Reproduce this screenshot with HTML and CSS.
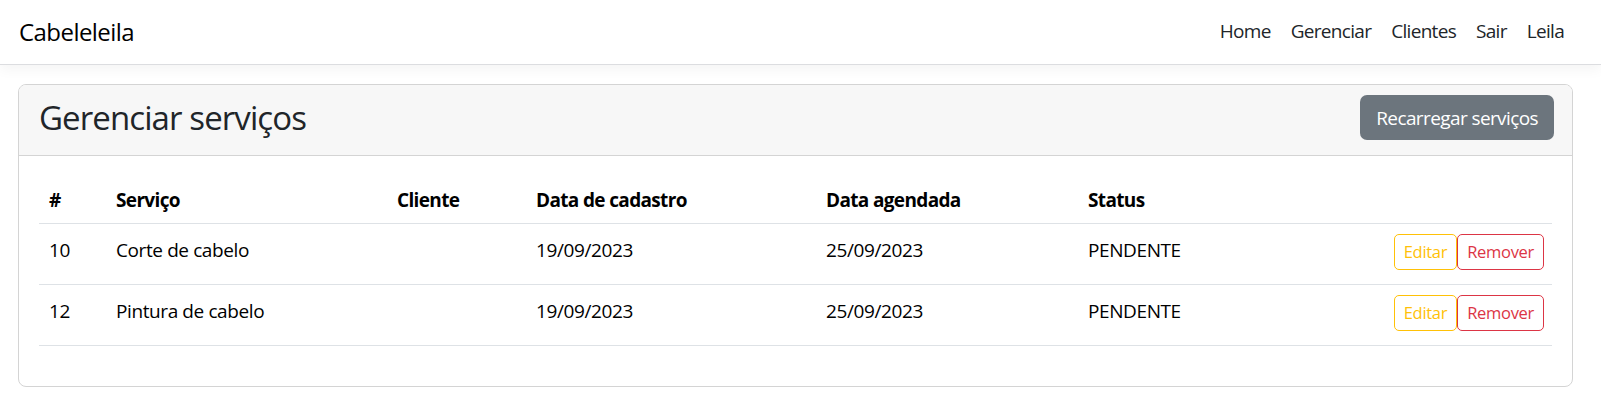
FILE: index.html
```html
<!DOCTYPE html>
<html lang="pt-BR">
<head>
<meta charset="utf-8">
<title>Cabeleleila</title>
<link rel="stylesheet" href="styles.css">
</head>
<body>
<nav class="navbar">
  <a class="brand" href="#">Cabeleleila</a>
  <ul class="nav-links">
    <li><a href="#">Home</a></li>
    <li><a href="#">Gerenciar</a></li>
    <li><a href="#">Clientes</a></li>
    <li><a href="#">Sair</a></li>
    <li><a href="#">Leila</a></li>
  </ul>
</nav>
<main class="page">
  <section class="card">
    <header class="card-header">
      <h3 class="card-title">Gerenciar serviços</h3>
      <button class="btn btn-secondary" type="button">Recarregar serviços</button>
    </header>
    <div class="card-body">
      <table class="table">
        <thead>
          <tr>
            <th class="col-id">#</th>
            <th class="col-service">Serviço</th>
            <th class="col-client">Cliente</th>
            <th class="col-created">Data de cadastro</th>
            <th class="col-scheduled">Data agendada</th>
            <th class="col-status">Status</th>
            <th class="col-actions"></th>
          </tr>
        </thead>
        <tbody>
          <tr>
            <td>10</td>
            <td>Corte de cabelo</td>
            <td></td>
            <td>19/09/2023</td>
            <td>25/09/2023</td>
            <td>PENDENTE</td>
            <td class="actions"><button class="btn-sm btn-warning" type="button">Editar</button><button class="btn-sm btn-danger" type="button">Remover</button></td>
          </tr>
          <tr>
            <td>12</td>
            <td>Pintura de cabelo</td>
            <td></td>
            <td>19/09/2023</td>
            <td>25/09/2023</td>
            <td>PENDENTE</td>
            <td class="actions"><button class="btn-sm btn-warning" type="button">Editar</button><button class="btn-sm btn-danger" type="button">Remover</button></td>
          </tr>
        </tbody>
      </table>
    </div>
  </section>
</main>
</body>
</html>
```
FILE: styles.css
```css
* { box-sizing: border-box; }

body {
  margin: 0;
  background: #fff;
  color: #212529;
  font-family: "Open Sans", "Noto Sans", sans-serif;
  font-size: 19px;
  letter-spacing: -0.4px;
}

.navbar {
  height: 65px;
  display: flex;
  align-items: center;
  justify-content: space-between;
  padding: 0 27px 2px 19px;
  background: #fff;
  border-bottom: 1px solid #dcdde0;
  box-shadow: 0 5px 12px rgba(0, 0, 0, 0.045);
  position: relative;
  z-index: 1;
}

.brand {
  color: #000;
  text-decoration: none;
  font-size: 24px;
  letter-spacing: -0.55px;
}

.nav-links {
  display: flex;
  list-style: none;
  margin: 0;
  padding: 0;
}

.nav-links a {
  display: block;
  padding: 8px 10px;
  color: #212529;
  text-decoration: none;
  letter-spacing: -0.7px;
}

.page {
  padding: 19px 28px 20px 18px;
}

.card {
  border: 1px solid #d4d4d4;
  border-radius: 8px;
  overflow: hidden;
}

.card-header {
  height: 71px;
  display: flex;
  align-items: flex-start;
  justify-content: space-between;
  padding: 10px 18px 0 20px;
  background: #f7f7f7;
  border-bottom: 1px solid #d4d4d4;
}

.card-title {
  margin: 0;
  font-size: 33px;
  font-weight: 400;
  line-height: 45px;
  letter-spacing: -0.9px;
}

.btn {
  font-family: inherit;
  border: 1px solid transparent;
  cursor: pointer;
}

.btn-secondary {
  height: 45px;
  padding: 0 15px;
  border-radius: 7px;
  background: #6c757d;
  color: #fff;
  font-size: 19px;
  letter-spacing: -0.6px;
}

.card-body {
  padding: 20px;
}

.table {
  width: 100%;
  margin-bottom: 20px;
  border-collapse: collapse;
  table-layout: fixed;
  color: #000;
}

.table th,
.table td {
  text-align: left;
  vertical-align: top;
  padding: 9px 10px 0;
  line-height: 30px;
  border-bottom: 1px solid #dee2e6;
}

.table th {
  height: 47px;
  font-weight: 700;
  letter-spacing: -0.65px;
}

.table td {
  height: 61px;
  padding-top: 11px;
}

.table td.actions {
  padding-top: 10px;
  text-align: right;
  padding-right: 8px;
}

.col-id { width: 67px; }
.col-service { width: 281px; }
.col-client { width: 139px; }
.col-created { width: 290px; }
.col-scheduled { width: 262px; }
.col-status { width: 200px; }

.btn-sm {
  display: inline-block;
  height: 36px;
  padding: 0 9px;
  font-family: inherit;
  font-size: 16.5px;
  letter-spacing: -0.3px;
  line-height: 34px;
  background: #fff;
  border: 1px solid;
  border-radius: 5px;
  vertical-align: top;
  cursor: pointer;
}

.btn-warning {
  color: #ffc107;
  border-color: #ffc107;
}

.btn-danger {
  color: #dc3545;
  border-color: #dc3545;
}
```
